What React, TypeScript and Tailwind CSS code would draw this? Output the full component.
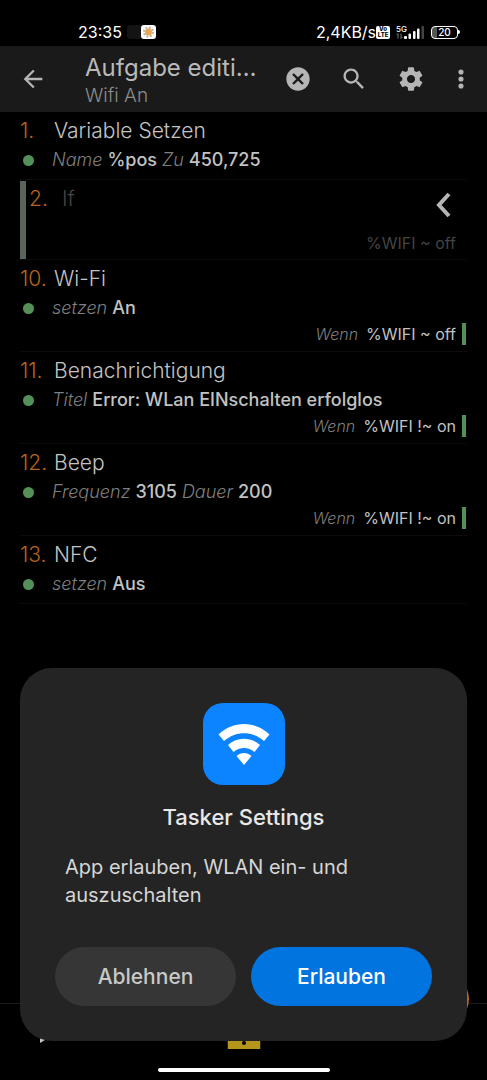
import type { ReactNode } from 'react';

type Param = { label: string; value: string };

type Action = {
  no: number;
  name: string;
  params: Param[];
  condition?: string;
};

const VARIABLE_SET: Action = { no: 1, name: 'Variable Setzen', params: [{ label: 'Name', value: '%pos' }, { label: 'Zu', value: '450,725' }] };

const ACTIONS: Action[] = [
  { no: 10, name: 'Wi-Fi', params: [{ label: 'setzen', value: 'An' }], condition: '%WIFI ~ off' },
  {
    no: 11,
    name: 'Benachrichtigung',
    params: [{ label: 'Titel', value: 'Error: WLan EINschalten erfolglos' }],
    condition: '%WIFI !~ on',
  },
  {
    no: 12,
    name: 'Beep',
    params: [{ label: 'Frequenz', value: '3105' }, { label: 'Dauer', value: '200' }],
    condition: '%WIFI !~ on',
  },
  { no: 13, name: 'NFC', params: [{ label: 'setzen', value: 'Aus' }] },
];

function StatusBar() {
  return (
    <div className="flex h-[46px] items-end justify-between pr-[27px] pb-1 pl-[78px] text-white">
      <div className="flex items-center gap-1">
        <span className="text-base leading-5">23:35</span>
        <svg viewBox="0 0 30 16" className="h-4 w-[30px]" aria-hidden="true">
          <rect x="1" y="1" width="15" height="14" rx="3" fill="#141414" />
          <rect x="15" y="1" width="15" height="14" rx="3" fill="#fff" />
          <circle cx="22.500" cy="8" r="4.500" fill="none" stroke="#b9b4a8" strokeWidth="2" strokeDasharray="2 1.500" />
          <circle cx="22.500" cy="8" r="3.500" fill="#e9a650" />
        </svg>
      </div>
      <div className="flex items-center">
        <span className="text-base leading-5">2,4KB/s</span>
        <span className="flex h-[13px] w-[14px] flex-col items-center justify-center rounded-xs bg-white text-[6px] leading-[6px] font-extrabold text-black">
          <span>Vo</span>
          <span>LTE</span>
        </span>
        <span className="ml-[6px] flex flex-col">
          <span className="text-[8px] leading-[8px] font-medium">5G</span>
          <svg viewBox="0 0 7 6" className="h-[6px] w-[7px]" fill="none" stroke="#777" aria-hidden="true">
            <path d="M2 5.500V.5M.5 2 2 .5M5 .5v5M6.500 4 5 5.500" />
          </svg>
        </span>
        <svg viewBox="0 0 22 14" className="-ml-1 h-[14px] w-[22px]" fill="#fff" aria-hidden="true">
          <rect x="1" y="11" width="3" height="3" rx="1" />
          <rect x="5.500" y="8.500" width="2.500" height="5.500" rx="1" />
          <rect x="10" y="6" width="2.500" height="8" rx="1" />
          <rect x="14" y="3.500" width="2.500" height="10.500" rx="1" />
          <rect x="18.500" y="1" width="2.500" height="13" rx="1" fill="#444" />
        </svg>
        <span className="ml-[6px] flex items-center">
          <span className="flex h-[13px] w-[27px] items-center justify-center rounded-[4px] border border-white bg-linear-to-r from-[#555] from-20% to-transparent to-20% text-[10px] leading-3 font-medium">
            20
          </span>
          <span className="h-1 w-[2px] rounded-r-full bg-white" />
        </span>
      </div>
    </div>
  );
}

function IconButton({ label, className, children }: { label: string; className: string; children: ReactNode }) {
  return (
    <button type="button" aria-label={label} className={`flex shrink-0 items-center justify-center ${className}`}>
      {children}
    </button>
  );
}

function AppBar() {
  return (
    <header className="flex h-[66px] items-center bg-[#1a1a1a] pr-3 pl-[19px] text-[#b5b5b5]">
      <IconButton label="Zurück" className="size-7">
        <svg viewBox="0 0 24 24" className="size-7" fill="currentColor">
          <path d="M20 11H7.830l5.590-5.590L12 4l-8 8 8 8 1.410-1.410L7.830 13H20v-2z" />
        </svg>
      </IconButton>
      <div className="ml-[38px] min-w-0 flex-1 pt-[2px] whitespace-nowrap">
        <h1 className="text-2xl leading-8 text-[#b9b9b9]">Aufgabe editi…</h1>
        <p className="text-[19px] leading-6 font-light text-[#8c8c8c]">Wifi An</p>
      </div>
      <IconButton label="Abbrechen" className="ml-[21px] size-7">
        <svg viewBox="0 0 24 24" className="size-7" fill="currentColor">
          <path d="M12 2C6.470 2 2 6.470 2 12s4.470 10 10 10 10-4.470 10-10S17.530 2 12 2zm5 13.590L15.590 17 12 13.410 8.410 17 7 15.590 10.590 12 7 8.410 8.410 7 12 10.590 15.590 7 17 8.410 13.410 12 17 15.590z" />
        </svg>
      </IconButton>
      <IconButton label="Suchen" className="ml-7 size-7">
        <svg viewBox="0 0 24 24" className="size-7" fill="currentColor">
          <path d="M15.500 14h-.79l-.28-.27C15.410 12.590 16 11.110 16 9.500 16 5.910 13.090 3 9.500 3S3 5.910 3 9.500 5.910 16 9.500 16c1.610 0 3.090-.59 4.230-1.570l.27.28v.79l5 4.990L20.490 19l-4.990-5zm-6 0C7.010 14 5 11.990 5 9.500S7.010 5 9.500 5 14 7.010 14 9.500 11.990 14 9.500 14z" />
        </svg>
      </IconButton>
      <IconButton label="Einstellungen" className="ml-[29px] size-7">
        <svg viewBox="0 0 24 24" className="size-7" fill="currentColor">
          <path d="M19.430 12.980c.04-.32.07-.64.07-.98s-.03-.66-.07-.98l2.110-1.650c.19-.15.24-.42.12-.64l-2-3.460c-.12-.22-.39-.3-.61-.22l-2.490 1c-.52-.4-1.080-.73-1.690-.98l-.38-2.650C14.460 2.180 14.250 2 14 2h-4c-.25 0-.46.18-.49.42l-.38 2.650c-.61.25-1.170.59-1.690.98l-2.490-1c-.23-.09-.49 0-.61.22l-2 3.460c-.13.22-.07.49.12.64l2.110 1.650c-.04.32-.07.65-.07.98s.03.66.07.98l-2.110 1.650c-.19.15-.24.42-.12.64l2 3.460c.12.22.39.3.61.22l2.490-1c.52.4 1.080.73 1.690.98l.38 2.650c.03.24.24.42.49.42h4c.25 0 .46-.18.49-.42l.38-2.650c.61-.25 1.170-.59 1.690-.98l2.490 1c.23.09.49 0 .61-.22l2-3.460c.12-.22.07-.49-.12-.64l-2.110-1.650zM12 15.500c-1.930 0-3.500-1.570-3.500-3.500s1.570-3.500 3.500-3.500 3.500 1.570 3.500 3.500-1.570 3.500-3.500 3.500z" />
        </svg>
      </IconButton>
      <IconButton label="Weitere Optionen" className="ml-[22px] size-7">
        <svg viewBox="0 0 24 24" className="size-7" fill="currentColor">
          <circle cx="12" cy="6" r="2.200" />
          <circle cx="12" cy="12" r="2.200" />
          <circle cx="12" cy="18" r="2.200" />
        </svg>
      </IconButton>
    </header>
  );
}

function ActionRow({ action }: { action: Action }) {
  return (
    <li className="border-b border-[#0b0b0b] pt-1 pb-[5px]">
      <div className="flex text-[21px] leading-[30px] font-light">
        <span className="w-[34px] shrink-0 text-[#b5651d]">{action.no}.</span>
        <span className="text-[#c4c4c4]">{action.name}</span>
      </div>
      <div className="flex items-center text-lg leading-7">
        <span className="mr-[18px] ml-[3px] size-[11px] shrink-0 rounded-full bg-[#539158]" />
        <p className="flex gap-[5px]">
          {action.params.map((p) => (
            <span key={p.label} className="flex gap-[5px]">
              <span className="font-light text-[#7f7f7f] italic">{p.label}</span>
              <span className="font-medium text-[#c2c2c2]">{p.value}</span>
            </span>
          ))}
        </p>
      </div>
      {action.condition && (
        <div className="flex h-6 items-center justify-end gap-[6px] pr-px text-base leading-6">
          <span className="mr-[2px] font-light text-[#7f7f7f] italic">Wenn</span>
          <span className="text-[#c2c2c2]">{action.condition}</span>
          <span className="h-[22px] w-1 bg-[#539158]" />
        </div>
      )}
    </li>
  );
}

function IfRow() {
  return (
    <li className="flex border-b border-[#0b0b0b]">
      <span className="mt-px w-[6px] bg-[#59655b]" />
      <div className="flex-1 pt-1 pr-[11px] pl-[3px]">
        <div className="flex text-[21px] leading-[30px] font-light">
          <span className="w-[33px] text-[#b5651d]">2.</span>
          <span className="flex-1 text-[#444]">If</span>
          <button type="button" aria-label="Block einklappen" className="mt-2 mr-[5px]">
            <svg viewBox="0 0 16 26" className="h-[26px] w-4" fill="none" stroke="#b5b5b5" strokeWidth="4">
              <path d="M14 2 4 13l10 11" />
            </svg>
          </button>
        </div>
        <p className="pt-[9px] text-right text-base leading-8 text-[#444]">%WIFI ~ off</p>
      </div>
    </li>
  );
}

function BottomBar() {
  return (
    <footer className="relative mt-auto h-[77px] border-t border-[#1c1c1c]">
      <svg viewBox="0 0 20 24" className="absolute top-[15px] left-10 h-6 w-5" fill="#c4c4c4" aria-hidden="true">
        <path d="M0 0v24l20-12z" />
      </svg>
      <svg viewBox="0 0 33 33" className="absolute top-3 left-1/2 h-[33px] w-[33px] -translate-x-1/2" aria-hidden="true">
        <path fill="#b5961a" d="M0 0h33v33H0z" />
        <path d="M16 6v16" stroke="#000" strokeWidth="3" />
        <circle cx="16.500" cy="27" r="2" />
      </svg>
      <span className="absolute -top-[30px] right-[18px] size-[50px] rounded-full bg-[#b5651d]" />
      <span className="absolute bottom-2 left-1/2 h-1 w-[172px] -translate-x-1/2 rounded-full bg-white" />
    </footer>
  );
}

function PermissionDialog() {
  return (
    <div
      role="dialog"
      aria-labelledby="dialog-title"
      className="fixed inset-x-5 bottom-[39px] rounded-[32px] bg-[#242424] p-[35px]"
    >
      <div className="mx-auto flex size-[82px] items-center justify-center rounded-[20px] bg-[#0d84ff]">
        <svg viewBox="0 0 52 42" className="h-[42px] w-[52px]" fill="#fff" aria-hidden="true">
          <path d="M.5 11.500C15-2.500 37-2.500 51.500 11.500L46 18C34.500 7.500 17.500 7.500 6 18z" />
          <path d="M10 22c9-8.500 23-8.500 32 0l-5.500 7c-6-5.500-15-5.500-21 0z" />
          <path d="M18.500 33c4.500-4 10.500-4 15 0L26 42z" />
        </svg>
      </div>
      <h2 id="dialog-title" className="mt-[18px] text-center text-[22px] leading-7 font-medium text-[#e8e8e8]">
        Tasker Settings
      </h2>
      <p className="mx-[10px] mt-[22px] text-xl leading-7 text-[#d6d6d6]">App erlauben, WLAN ein- und auszuschalten</p>
      <div className="mt-[38px] grid grid-cols-2 gap-[15px] text-[21px] leading-7 font-medium">
        <button type="button" className="h-[59px] rounded-full bg-[#363636] text-[#c8c8c8]">
          Ablehnen
        </button>
        <button type="button" className="h-[59px] rounded-full bg-[#0274df] text-white">
          Erlauben
        </button>
      </div>
    </div>
  );
}

export default function App() {
  return (
    <div className="flex min-h-screen flex-col bg-black font-['Inter',sans-serif]">
      <StatusBar />
      <AppBar />
      <main className="px-5">
        <ul>
          <ActionRow action={VARIABLE_SET} />
          <IfRow />
          {ACTIONS.map((a) => (
            <ActionRow key={a.no} action={a} />
          ))}
        </ul>
      </main>
      <BottomBar />
      <PermissionDialog />
    </div>
  );
}
